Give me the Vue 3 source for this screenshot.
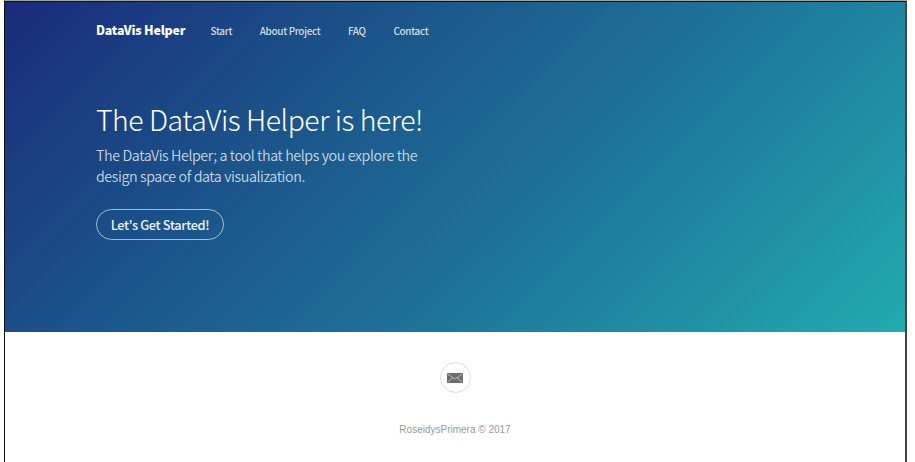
<template>
  <div class="page">
    <header class="hero">
      <nav class="navbar">
        <a class="brand" href="#">DataVis Helper</a>
        <a v-for="link in links" :key="link" class="nav-link" href="#">{{ link }}</a>
      </nav>

      <section class="intro">
        <h1>The DataVis Helper is here!</h1>
        <p>
          The DataVis Helper; a tool that helps you explore the<br />
          design space of data visualization.
        </p>
        <button class="start-btn">Let's Get Started!</button>
      </section>
    </header>

    <footer class="footer">
      <a class="mail" href="#" aria-label="Email">
        <svg width="16" height="10" viewBox="0 0 16 10">
          <rect width="16" height="10" rx="0.8" fill="#6c6c6c" />
          <path d="M1 1.3 L6.2 5 Q8 6.2 9.8 5 L15 1.3 M1.3 8.6 L5.6 5 M14.7 8.6 L10.4 5" fill="none" stroke="#d0d0d0" stroke-width="0.8" />
        </svg>
      </a>
      <p class="copyright">RoseidysPrimera © 2017</p>
    </footer>
  </div>
</template>

<script setup>
const links = ['Start', 'About Project', 'FAQ', 'Contact'];
</script>

<style>
body {
  background: #fff;
}
</style>

<style scoped>
.page {
  box-sizing: border-box;
  width: 903px;
  height: 461px;
  margin: 1px 0 0 4px;
  border: 1px solid #111;
  border-right: 2px solid #444;
  border-bottom: 0;
  box-shadow: 0 -1px 0 #a3a69c;
  overflow: hidden;
  font-family: "Noto Sans CJK SC", sans-serif;
}

.hero {
  box-sizing: border-box;
  height: 330px;
  padding-left: 91px;
  background: linear-gradient(135deg, #1a2b7b 0%, #1b4f88 28%, #1e7399 60%, #22aab0 100%);
  color: #fff;
}

.navbar {
  display: flex;
  align-items: center;
  height: 56px;
}

.brand,
.nav-link {
  color: #fff;
  text-decoration: none;
  white-space: nowrap;
}

.brand {
  width: 114.5px;
  font-size: 12.4px;
  font-weight: 900;
  letter-spacing: -0.2px;
}

.nav-link {
  margin-right: 27.7px;
  color: rgba(255, 255, 255, 0.8);
  font-size: 10px;
  font-weight: 500;
  letter-spacing: -0.36px;
}

.intro {
  padding-top: 41px;
}

h1 {
  margin: 0;
  font-size: 28.4px;
  font-weight: 300;
  letter-spacing: -0.46px;
  line-height: 40px;
}

p {
  margin: 0;
}

.intro p {
  margin-top: 5px;
  color: rgba(255, 255, 255, 0.76);
  font-size: 14.3px;
  font-weight: 350;
  letter-spacing: -0.42px;
  line-height: 21px;
  white-space: nowrap;
}

.start-btn {
  display: block;
  box-sizing: border-box;
  width: 128px;
  height: 31px;
  margin-top: 23px;
  padding: 0;
  border: 1px solid rgba(255, 255, 255, 0.6);
  border-radius: 16px;
  background: transparent;
  color: #e8f3ff;
  font-family: inherit;
  font-size: 12.8px;
  font-weight: 500;
  letter-spacing: -0.35px;
  line-height: 28px;
  white-space: nowrap;
}

.footer {
  display: flex;
  flex-direction: column;
  align-items: center;
  padding-top: 30px;
}

.mail {
  display: flex;
  align-items: center;
  justify-content: center;
  box-sizing: border-box;
  width: 31px;
  height: 31px;
  border: 1px solid #ddd;
  border-radius: 50%;
}

.copyright {
  margin-top: 29px;
  color: #999;
  font-family: "Liberation Sans", Arial, sans-serif;
  font-size: 10px;
  line-height: 16px;
}
</style>
